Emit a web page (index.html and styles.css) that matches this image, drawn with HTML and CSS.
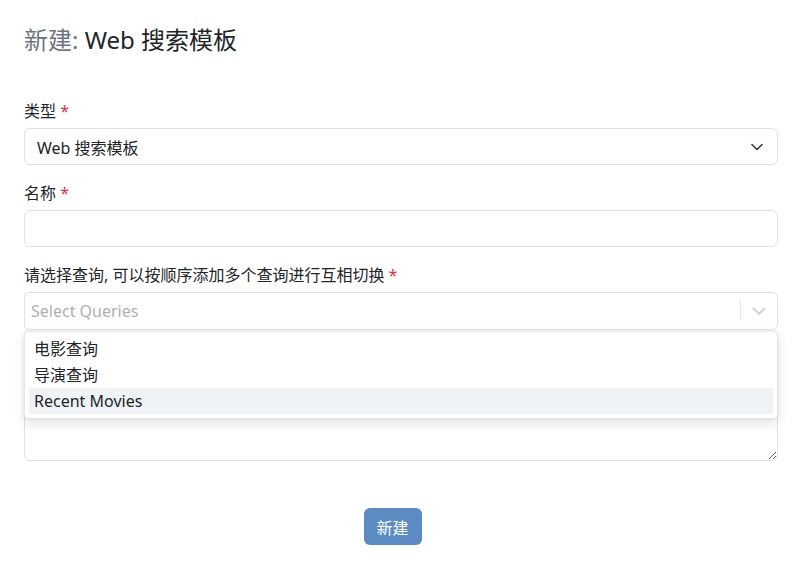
FILE: index.html
```html
<!DOCTYPE html>
<html lang="zh">
<head>
<meta charset="utf-8">
<title>新建: Web 搜索模板</title>
<link rel="stylesheet" href="styles.css">
</head>
<body>
<div class="page">
  <h1 class="title"><span class="title-muted">新建:</span> Web 搜索模板</h1>
  <form class="form">
    <div class="group">
      <label class="label">类型 <span class="req">*</span></label>
      <div class="select">
        <span class="select-value">Web 搜索模板</span>
        <svg class="chev" width="12" height="8" viewBox="0 0 12 8"><path d="M1 1.5 L6 6.5 L11 1.5" fill="none" stroke="#343a40" stroke-width="1.6" stroke-linecap="round" stroke-linejoin="round"/></svg>
      </div>
    </div>
    <div class="group">
      <label class="label">名称 <span class="req">*</span></label>
      <input class="input" type="text">
    </div>
    <div class="group">
      <label class="label">请选择查询, 可以按顺序添加多个查询进行互相切换 <span class="req">*</span></label>
      <div class="multi">
        <div class="multi-box">
          <span class="placeholder">Select Queries</span>
          <span class="sep"></span>
          <svg class="chev2" width="14" height="9" viewBox="0 0 14 9"><path d="M1.5 1.5 L7 7 L12.5 1.5" fill="none" stroke="#cfd2d6" stroke-width="2" stroke-linecap="round" stroke-linejoin="round"/></svg>
        </div>
        <div class="menu">
          <div class="item">电影查询</div>
          <div class="item">导演查询</div>
          <div class="item active">Recent Movies</div>
        </div>
      </div>
    </div>
    <div class="group group-text">
      <textarea class="textarea" rows="3" aria-label="描述"></textarea>
    </div>
    <div class="actions">
      <button type="button" class="btn">新建</button>
    </div>
  </form>
</div>
</body>
</html>
```
FILE: styles.css
```css
* { box-sizing: border-box; }
html, body { margin: 0; padding: 0; background: #fff; }
body {
  font-family: "Noto Sans", "Noto Sans CJK SC", sans-serif;
  color: #212529;
  font-size: 16px;
}
.page { padding: 24px 25px 0 24px; }
.title {
  margin: 1px 0 0 0;
  font-size: 24px;
  font-weight: 400;
  line-height: 29px;
  color: #212529;
}
.title-muted { color: #6c757d; }
.form { margin-top: 45px; }
.group { margin-bottom: 16px; }
.group-text { padding-top: 29px; }
.label {
  display: block;
  font-size: 16px;
  line-height: 24px;
  margin-bottom: 5px;
  color: #212529;
}
.req { color: #dc3545; }
.select {
  height: 37px;
  border: 1px solid #dee2e6;
  border-radius: 6px;
  display: flex;
  align-items: center;
  padding: 0 14px 0 12px;
  font-size: 16px;
}
.select-value { flex: 1; }
.chev { display: block; }
.input {
  display: block;
  width: 100%;
  height: 37px;
  border: 1px solid #dee2e6;
  border-radius: 6px;
  font: inherit;
  padding: 0 12px;
}
.multi { position: relative; }
.multi-box {
  height: 38px;
  border: 1px solid #dee2e6;
  border-radius: 5px;
  display: flex;
  align-items: center;
  padding: 0 0 0 6px;
}
.placeholder { flex: 1; color: #adb0b4; font-size: 16px; }
.sep { width: 1px; height: 20px; background: #e3e5e8; }
.chev2 { display: block; margin: 0 11px 0 11px; }
.menu {
  position: absolute;
  left: 0;
  right: 0;
  top: calc(100% + 1px);
  background: #fff;
  border: 1px solid #e6e8eb;
  border-radius: 4px;
  padding: 4px;
  box-shadow: 0 4px 11px rgba(0, 0, 0, 0.12), 0 0 0 1px rgba(0, 0, 0, 0.03);
  z-index: 5;
}
.item {
  height: 26px;
  line-height: 26px;
  padding: 0 5px;
  font-size: 16px;
  color: #212529;
}
.item.active { background: #f0f3f6; }
.textarea {
  display: block;
  width: 100%;
  height: 86px;
  border: 1px solid #dee2e6;
  border-radius: 6px;
  font: inherit;
  padding: 6px 12px;
  resize: vertical;
}
.actions {
  display: flex;
  justify-content: center;
  padding-right: 17px;
  margin-top: 47px;
}
.btn {
  background: #5b8bc2;
  color: #fff;
  border: none;
  border-radius: 6px;
  font: inherit;
  font-size: 16px;
  width: 58px;
  height: 37px;
  padding: 0;
}
```
